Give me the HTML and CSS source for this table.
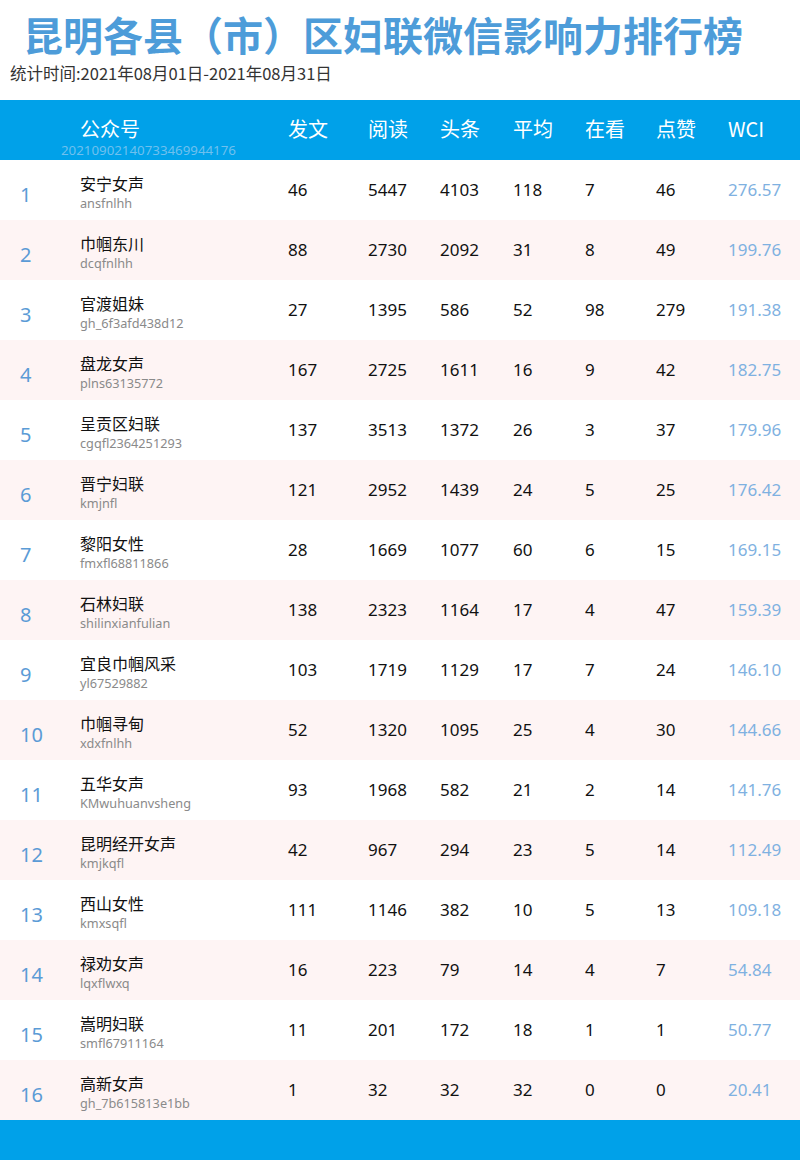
FILE: index.html
```html
<!DOCTYPE html>
<html lang="zh-CN">
<head>
<meta charset="utf-8">
<title>昆明各县（市）区妇联微信影响力排行榜</title>
<link rel="stylesheet" href="styles.css">
</head>
<body>
<div class="page">
  <header class="top">
    <h1 class="title">昆明各县（市）区妇联微信影响力排行榜</h1>
    <p class="period">统计时间:2021年08月01日-2021年08月31日</p>
  </header>
  <div class="table">
    <div class="row head">
      <div class="c-rank"></div>
      <div class="c-name">公众号<span class="mark">20210902140733469944176</span></div>
      <div>发文</div><div>阅读</div><div>头条</div><div>平均</div><div>在看</div><div>点赞</div><div>WCI</div>
    </div>
    <div class="row"><div class="c-rank">1</div><div class="c-name"><span class="nm">安宁女声</span><span class="id">ansfnlhh</span></div><div>46</div><div>5447</div><div>4103</div><div>118</div><div>7</div><div>46</div><div class="wci">276.57</div></div>
    <div class="row alt"><div class="c-rank">2</div><div class="c-name"><span class="nm">巾帼东川</span><span class="id">dcqfnlhh</span></div><div>88</div><div>2730</div><div>2092</div><div>31</div><div>8</div><div>49</div><div class="wci">199.76</div></div>
    <div class="row"><div class="c-rank">3</div><div class="c-name"><span class="nm">官渡姐妹</span><span class="id">gh_6f3afd438d12</span></div><div>27</div><div>1395</div><div>586</div><div>52</div><div>98</div><div>279</div><div class="wci">191.38</div></div>
    <div class="row alt"><div class="c-rank">4</div><div class="c-name"><span class="nm">盘龙女声</span><span class="id">plns63135772</span></div><div>167</div><div>2725</div><div>1611</div><div>16</div><div>9</div><div>42</div><div class="wci">182.75</div></div>
    <div class="row"><div class="c-rank">5</div><div class="c-name"><span class="nm">呈贡区妇联</span><span class="id">cgqfl2364251293</span></div><div>137</div><div>3513</div><div>1372</div><div>26</div><div>3</div><div>37</div><div class="wci">179.96</div></div>
    <div class="row alt"><div class="c-rank">6</div><div class="c-name"><span class="nm">晋宁妇联</span><span class="id">kmjnfl</span></div><div>121</div><div>2952</div><div>1439</div><div>24</div><div>5</div><div>25</div><div class="wci">176.42</div></div>
    <div class="row"><div class="c-rank">7</div><div class="c-name"><span class="nm">黎阳女性</span><span class="id">fmxfl68811866</span></div><div>28</div><div>1669</div><div>1077</div><div>60</div><div>6</div><div>15</div><div class="wci">169.15</div></div>
    <div class="row alt"><div class="c-rank">8</div><div class="c-name"><span class="nm">石林妇联</span><span class="id">shilinxianfulian</span></div><div>138</div><div>2323</div><div>1164</div><div>17</div><div>4</div><div>47</div><div class="wci">159.39</div></div>
    <div class="row"><div class="c-rank">9</div><div class="c-name"><span class="nm">宜良巾帼风采</span><span class="id">yl67529882</span></div><div>103</div><div>1719</div><div>1129</div><div>17</div><div>7</div><div>24</div><div class="wci">146.10</div></div>
    <div class="row alt"><div class="c-rank">10</div><div class="c-name"><span class="nm">巾帼寻甸</span><span class="id">xdxfnlhh</span></div><div>52</div><div>1320</div><div>1095</div><div>25</div><div>4</div><div>30</div><div class="wci">144.66</div></div>
    <div class="row"><div class="c-rank">11</div><div class="c-name"><span class="nm">五华女声</span><span class="id">KMwuhuanvsheng</span></div><div>93</div><div>1968</div><div>582</div><div>21</div><div>2</div><div>14</div><div class="wci">141.76</div></div>
    <div class="row alt"><div class="c-rank">12</div><div class="c-name"><span class="nm">昆明经开女声</span><span class="id">kmjkqfl</span></div><div>42</div><div>967</div><div>294</div><div>23</div><div>5</div><div>14</div><div class="wci">112.49</div></div>
    <div class="row"><div class="c-rank">13</div><div class="c-name"><span class="nm">西山女性</span><span class="id">kmxsqfl</span></div><div>111</div><div>1146</div><div>382</div><div>10</div><div>5</div><div>13</div><div class="wci">109.18</div></div>
    <div class="row alt"><div class="c-rank">14</div><div class="c-name"><span class="nm">禄劝女声</span><span class="id">lqxflwxq</span></div><div>16</div><div>223</div><div>79</div><div>14</div><div>4</div><div>7</div><div class="wci">54.84</div></div>
    <div class="row"><div class="c-rank">15</div><div class="c-name"><span class="nm">嵩明妇联</span><span class="id">smfl67911164</span></div><div>11</div><div>201</div><div>172</div><div>18</div><div>1</div><div>1</div><div class="wci">50.77</div></div>
    <div class="row alt"><div class="c-rank">16</div><div class="c-name"><span class="nm">高新女声</span><span class="id">gh_7b615813e1bb</span></div><div>1</div><div>32</div><div>32</div><div>32</div><div>0</div><div>0</div><div class="wci">20.41</div></div>
  </div>
  <footer class="foot"></footer>
</div>
</body>
</html>
```
FILE: styles.css
```css
* { box-sizing: border-box; }
html, body { margin: 0; padding: 0; background: #fff; }
body {
  font-family: "Noto Sans", "Noto Sans CJK SC", sans-serif;
  color: #111;
}
.page { width: 800px; }
.top { height: 100px; padding-top: 10px; overflow: hidden; }
.title {
  margin: 0 0 0 23px;
  font-family: "Noto Sans CJK SC", sans-serif;
  font-weight: 700;
  font-size: 40px;
  line-height: 48px;
  color: #4d9cd9;
  white-space: nowrap;
}
.period {
  margin: 4px 0 0 10px;
  font-size: 16.5px;
  line-height: 22px;
  color: #333;
  font-family: "Noto Sans CJK SC", sans-serif;
}
.row {
  display: grid;
  grid-template-columns: 80px 208px 80px 72px 73px 72px 71px 72px 72px;
  height: 60px;
  align-items: center;
  font-size: 17px;
}
.row.alt { background: #fef4f4; }
.row > div { padding-bottom: 2px; }
.head {
  background: #00a1e9;
  color: #fff;
  font-size: 20px;
  font-family: "Noto Sans CJK SC", sans-serif;
}
.head > div { padding-bottom: 4px; }
.head .c-name { position: relative; }
.mark {
  position: absolute;
  left: -19px;
  top: 28px;
  font-family: "Noto Sans", sans-serif;
  font-size: 13.3px;
  line-height: 16px;
  color: #6fc0ee;
  white-space: nowrap;
}
.c-rank {
  padding-left: 20px;
  padding-top: 8px;
  font-size: 20px;
  color: #5b9bd6;
}
.row > .c-rank { padding-bottom: 0; }
.c-name { display: flex; flex-direction: column; }
.row > .c-name { padding: 4px 0 0 0; }
.head > .c-name { padding: 0 0 4px 0; }
.nm {
  font-family: "Noto Sans CJK SC", sans-serif;
  font-size: 16px;
  line-height: 22px;
  color: #111;
}
.id {
  font-size: 12.7px;
  line-height: 18px;
  color: #8a8a8a;
}
.wci { color: #7fb1e1; }
.foot { height: 40px; background: #00a1e9; }
```
